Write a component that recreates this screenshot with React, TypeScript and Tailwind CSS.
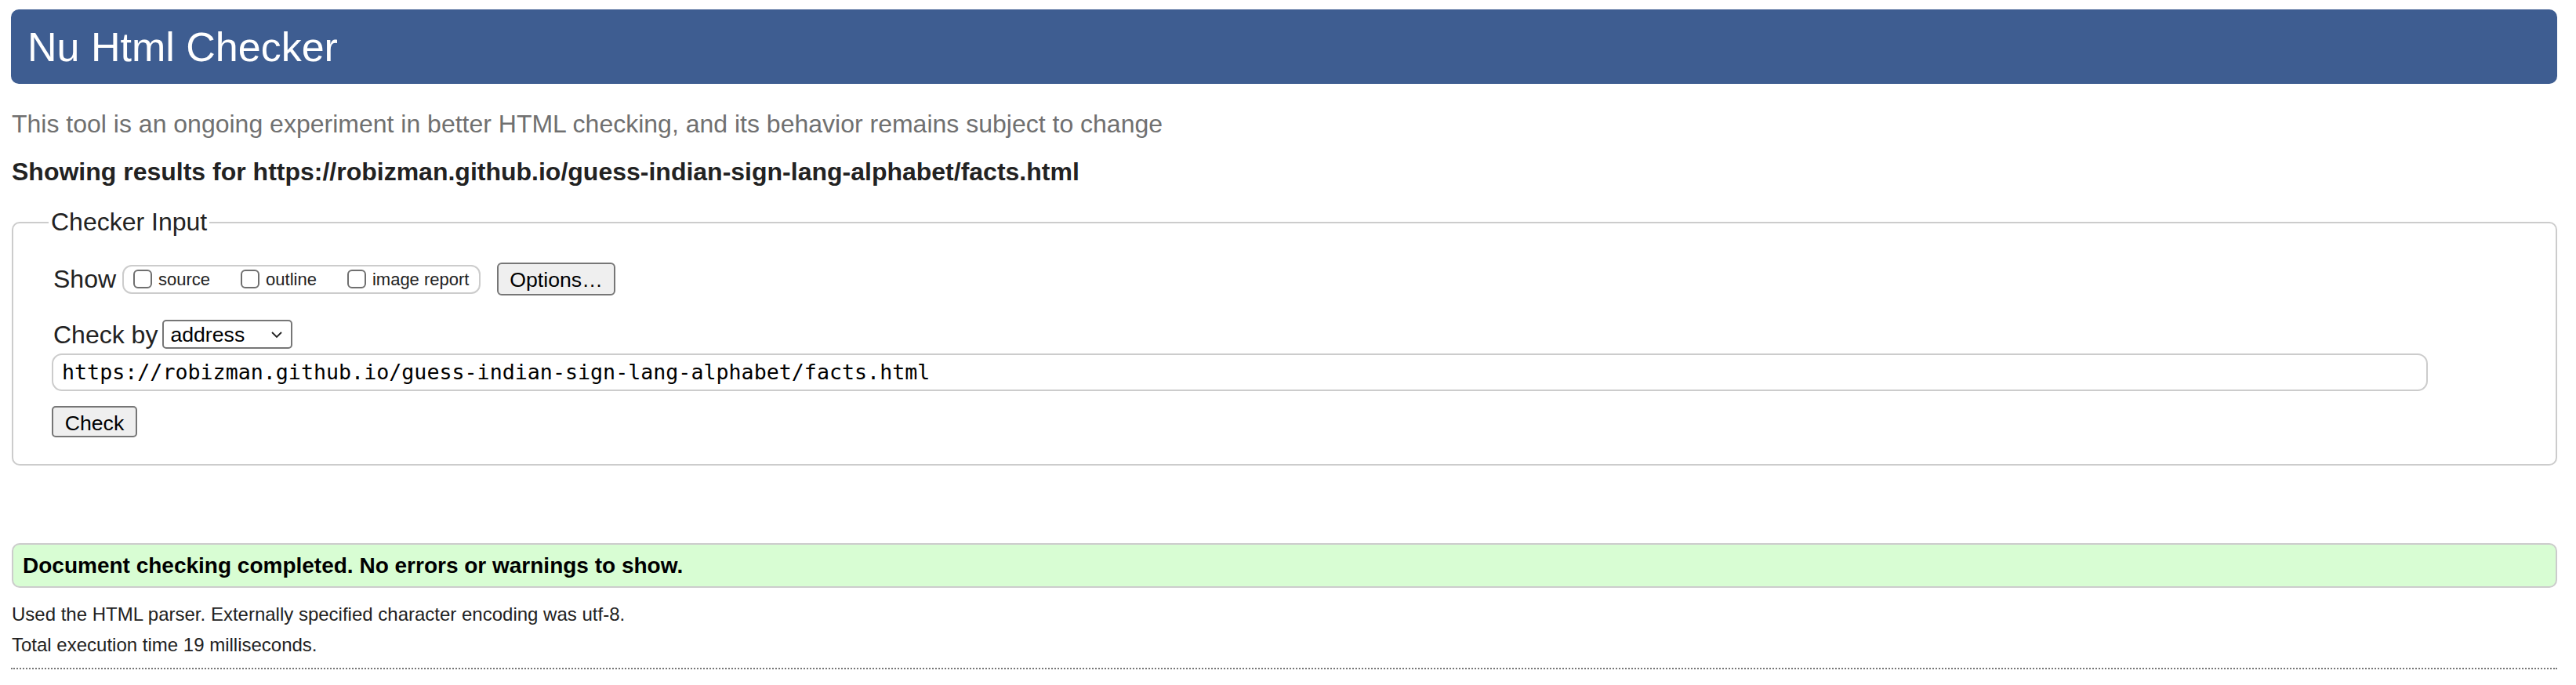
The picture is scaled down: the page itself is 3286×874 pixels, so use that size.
import React from "react";

const sans = { fontFamily: '"Liberation Sans", Arial, Helvetica, sans-serif' };

function Box({ label }: { label: string }) {
  return (
    <label className="flex items-center gap-[8px]">
      <span className="w-[24px] h-[24px] border-2 border-[#6f6f6f] rounded-[6px] bg-white" />
      <span className="text-[22px] text-[#222]">{label}</span>
    </label>
  );
}

export default function App() {
  return (
    <div className="min-h-screen bg-white text-[#222] pl-[14px] pr-[24px] pt-[12px]" style={sans}>
      <div className="h-[95px] bg-[#3e5d91] rounded-[10px] flex items-center pl-[21px]">
        <h1 className="text-[52px] text-white leading-none">Nu Html Checker</h1>
      </div>

      <p className="mt-[33px] ml-[1px] text-[32px] leading-[37px] text-[#707070]">
        This tool is an ongoing experiment in better HTML checking, and its behavior remains subject to change
      </p>
      <p className="mt-[24px] ml-[1px] text-[32px] leading-[37px] font-bold text-[#222]">
        Showing results for https://robizman.github.io/guess-indian-sign-lang-alphabet/facts.html
      </p>

      <fieldset className="mt-[27px] ml-[1px] border-2 border-[#cccccc] rounded-[10px] pl-[51px] pb-[34px]">
        <legend className="-ml-[6px] px-[3px] text-[32px] leading-[37px]">Checker Input</legend>

        <div className="mt-[33px] flex items-center h-[42px]">
          <span className="text-[32px] mr-[8px]">Show</span>
          <div className="h-[37px] w-[457px] border-2 border-[#cccccc] rounded-[12px] flex items-center pl-[12px] gap-[39px]">
            <Box label="source" />
            <Box label="outline" />
            <Box label="image report" />
          </div>
          <button className="ml-[21px] h-[42px] w-[151px] bg-[#efefef] border-2 border-[#767676] rounded-[6px] text-[26.67px] text-black">
            Options…
          </button>
        </div>

        <div className="mt-[30px] flex items-center h-[39px]">
          <span className="text-[32px] mr-[6px]">Check by</span>
          <div className="h-[37px] w-[166px] border-2 border-[#767676] rounded-[5px] bg-white flex items-center justify-between pl-[8px] pr-[10px]">
            <span className="text-[26.67px] text-black">address</span>
            <svg width="16" height="10" viewBox="0 0 16 10" fill="none" stroke="#222" strokeWidth="1.8">
              <path d="M2 2l6 6 6-6" />
            </svg>
          </div>
        </div>

        <div className="mt-[5px] -ml-[2px] h-[48px] w-[3031px] border-2 border-[#cccccc] rounded-[13px] flex items-center pl-[11px]">
          <span
            className="text-[26.67px] text-black"
            style={{ fontFamily: '"DejaVu Sans Mono", "Liberation Mono", monospace' }}
          >
            https://robizman.github.io/guess-indian-sign-lang-alphabet/facts.html
          </span>
        </div>

        <button className="mt-[19px] -ml-[2px] block h-[40px] w-[109px] bg-[#efefef] border-2 border-[#767676] rounded-[5px] text-[26.67px] text-black">
          Check
        </button>
      </fieldset>

      <div className="mt-[99px] ml-[1px] h-[57px] border-2 border-[#cccccc] rounded-[10px] bg-[#d8fdd3] flex items-center pl-[12px]">
        <p className="text-[28px] font-bold text-black">Document checking completed. No errors or warnings to show.</p>
      </div>

      <p className="mt-[14px] ml-[1px] text-[24px] leading-[39px] text-[#222]">
        Used the HTML parser. Externally specified character encoding was utf-8.
      </p>
      <p className="ml-[1px] text-[24px] leading-[39px] text-[#222]">Total execution time 19 milliseconds.</p>
      <div className="mt-[10px] border-t-2 border-dotted border-[#777]" />
    </div>
  );
}
